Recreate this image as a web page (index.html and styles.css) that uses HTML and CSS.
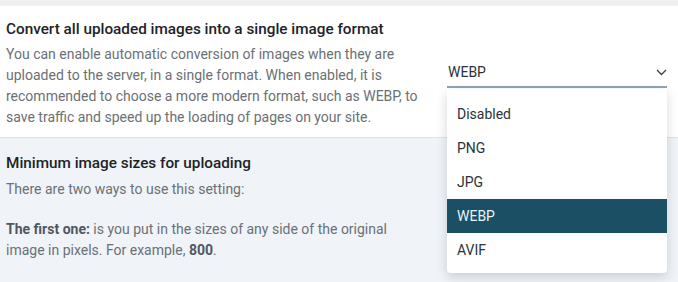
FILE: index.html
```html
<!DOCTYPE html>
<html lang="en">
<head>
    <meta charset="UTF-8">
    <meta name="viewport" content="width=device-width, initial-scale=1.0">
    <title>Image Settings</title>
    <link rel="stylesheet" href="styles.css">
</head>
<body>
    <div class="top-strip"></div>

    <!-- Conversion format setting -->
    <div class="setting setting-white">
        <div class="setting-text">
            <h3>Convert all uploaded images into a single image format</h3>
            <p>You can enable automatic conversion of images when they are uploaded to the server, in a single format. When enabled, it is recommended to choose a more modern format, such as WEBP, to save traffic and speed up the loading of pages on your site.</p>
        </div>
        <div class="setting-control">
            <div class="select">
                <span>WEBP</span>
                <svg class="chevron" width="11" height="7" viewBox="0 0 11 7">
                    <path d="M1 1l4.5 4.5L10 1" fill="none" stroke="#3c434a" stroke-width="1.4"/>
                </svg>
            </div>
            <ul class="dropdown">
                <li>Disabled</li>
                <li>PNG</li>
                <li>JPG</li>
                <li class="selected">WEBP</li>
                <li>AVIF</li>
            </ul>
        </div>
    </div>

    <!-- Minimum sizes setting -->
    <div class="setting setting-grey">
        <div class="setting-text">
            <h3>Minimum image sizes for uploading</h3>
            <p>There are two ways to use this setting:</p>
            <p class="gap"><b>The first one:</b> is you put in the sizes of any side of the original image in pixels. For example, <b>800</b>.</p>
        </div>
    </div>
</body>
</html>
```

FILE: styles.css
```css
body {
    font-family: Roboto, "Liberation Sans", sans-serif;
    background-color: #f0f4f9;
    margin: 0;
    padding: 0;
    height: 282px;
    overflow: hidden;
}

.top-strip {
    height: 5px;
    background-color: #f0f0f1;
    border-bottom: 1px solid #f3f3f4;
}

.setting {
    display: flex;
    align-items: center;
    gap: 25px;
    padding: 12px 6px 9px;
}

.setting-white {
    background-color: #fff;
    border-bottom: 1px solid #dfe2e6;
}

.setting-grey {
    background-color: #f0f4f9;
    padding-top: 14px;
}

.setting-text {
    width: 416px;
}

.setting-text h3 {
    margin: 0 0 4px;
    font-size: 15.3px;
    line-height: 22px;
    font-weight: 500;
    color: #1d2327;
    white-space: nowrap;
}

.setting-grey h3 {
    margin-bottom: 5px;
}

.setting-text p {
    margin: 0;
    font-size: 14px;
    line-height: 21px;
    color: #6b7075;
}

.setting-grey .setting-text p {
    width: 392px;
}

.setting-text p.gap {
    margin-top: 19px;
}

.setting-text b {
    color: #50575e;
    font-weight: 700;
}

.setting-control {
    position: relative;
    width: 220px;
}

.select {
    display: flex;
    justify-content: space-between;
    align-items: center;
    height: 28px;
    padding: 0 0 0 1px;
    border-bottom: 2px solid #8ca5b8;
    font-size: 14px;
    color: #2c3338;
}

.dropdown {
    position: absolute;
    top: 31px;
    left: 0;
    right: 0;
    margin: 0;
    padding: 8px 0 6px;
    list-style: none;
    background-color: #fff;
    border-radius: 0 0 4px 4px;
    box-shadow: 0 4px 12px rgba(0, 0, 0, 0.16);
    z-index: 2;
}

.dropdown li {
    height: 34px;
    line-height: 34px;
    padding-left: 10px;
    font-size: 14px;
    color: #2c3338;
}

.dropdown li.selected {
    background-color: #1b4f63;
    color: #e8f4ff;
}
```
